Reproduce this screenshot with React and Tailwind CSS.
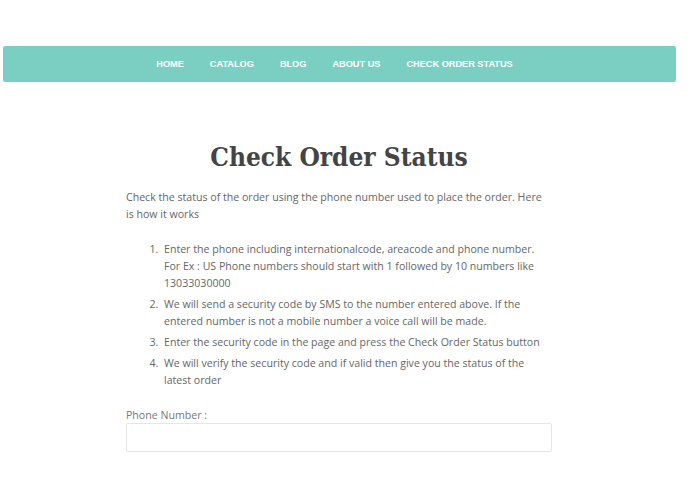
import React from 'react'

const links = ['HOME', 'CATALOG', 'BLOG', 'ABOUT US', 'CHECK ORDER STATUS']

const steps = [
  'Enter the phone including internationalcode, areacode and phone number. For Ex : US Phone numbers should start with 1 followed by 10 numbers like 13033030000',
  'We will send a security code by SMS to the number entered above. If the entered number is not a mobile number a voice call will be made.',
  'Enter the security code in the page and press the Check Order Status button',
  'We will verify the security code and if valid then give you the status of the latest order',
]

export default function App() {
  return (
    <div className="min-h-screen bg-white w-[678px] pt-[46px]" style={{ fontFamily: '"Open Sans", sans-serif' }}>
      {/* Top navigation */}
      <nav className="ml-[3px] w-[673px] h-[36px] rounded-[2px] bg-[#7acfc2] flex items-center justify-center gap-[26px] pr-[10px]">
        {links.map((l) => (
          <a
            key={l}
            href="#"
            className="text-white text-[9.2px] font-bold pt-[2px]"
            style={{ fontFamily: '"Liberation Sans", sans-serif' }}
          >
            {l}
          </a>
        ))}
      </nav>

      <main className="w-[426px] mx-auto pt-[57px]">
        <h1
          className="text-center text-[26px] font-bold text-[#444] leading-[36px]"
          style={{ fontFamily: '"DejaVu Serif Condensed", "DejaVu Serif", serif' }}
        >
          Check Order Status
        </h1>

        <p className="mt-[14px] text-[10.6px] leading-[17px] text-[#666]">
          Check the status of the order using the phone number used to place the order. Here is how it works
        </p>

        <ol className="mt-[18px] pl-[35px] list-decimal text-[10.6px] leading-[17px] text-[#666] flex flex-col gap-[4px]">
          {steps.map((s) => (
            <li key={s} className="pl-[3px]">{s}</li>
          ))}
        </ol>

        <label className="block mt-[18px] text-[10.6px] leading-[16px] text-[#777]">Phone Number :</label>
        <input className="block w-[426px] h-[29px] border border-[#e6e6e6] rounded-[2px] outline-none" />
      </main>
    </div>
  )
}
